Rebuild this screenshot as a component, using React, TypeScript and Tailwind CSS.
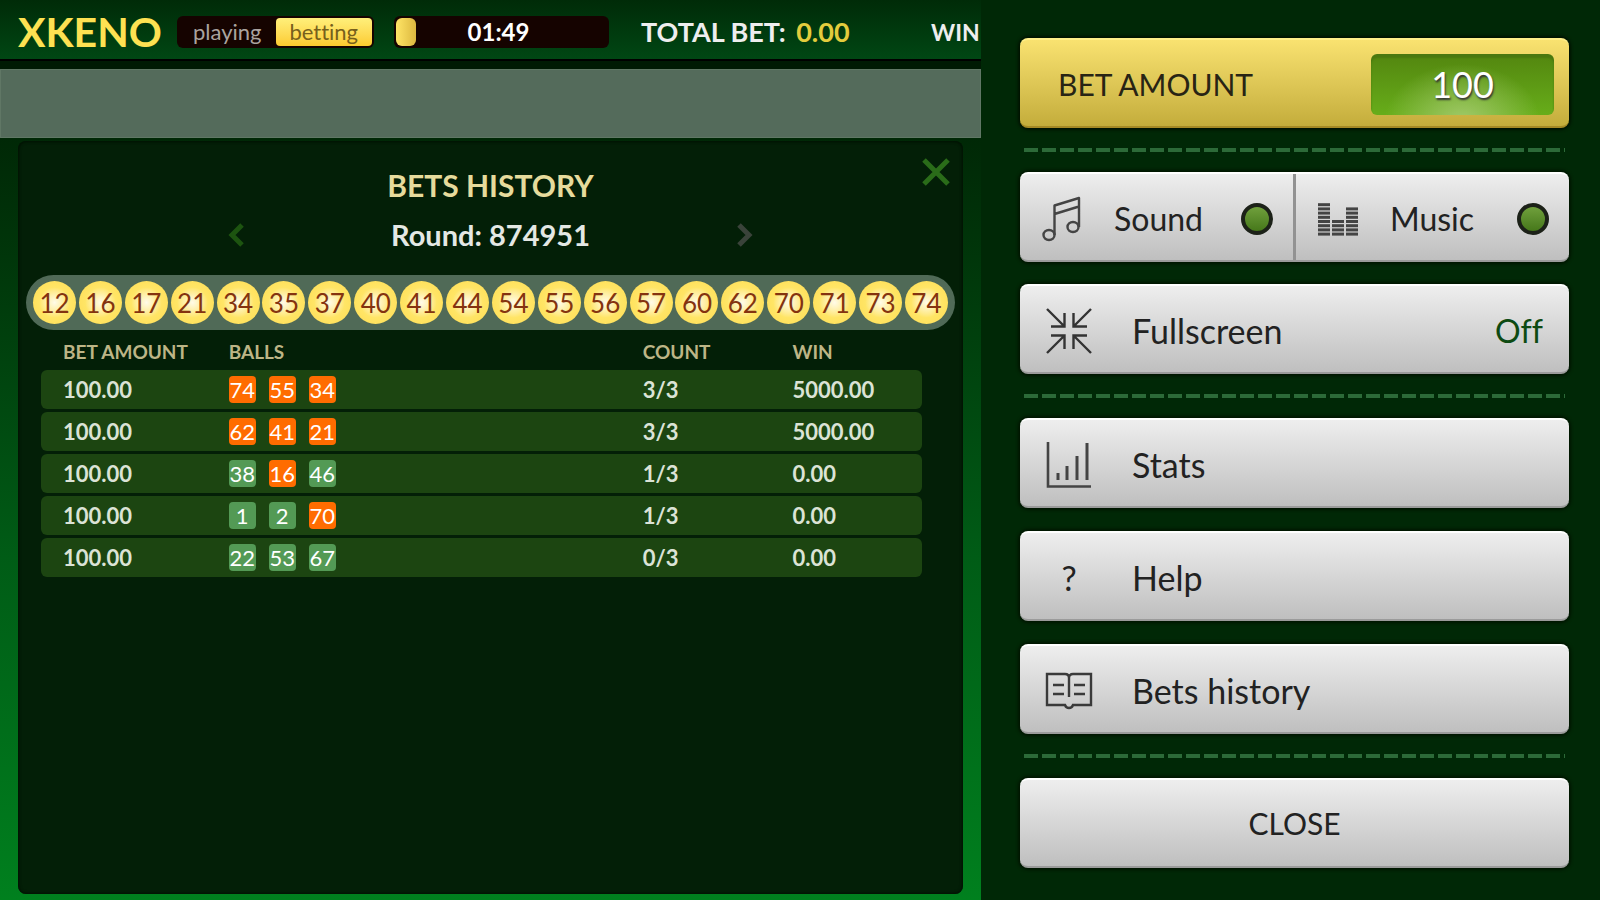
import type { ReactNode } from "react";

const drawn = [12, 16, 17, 21, 34, 35, 37, 40, 41, 44, 54, 55, 56, 57, 60, 62, 70, 71, 73, 74];

const bets = [
  { amount: "100.00", balls: [74, 55, 34], count: "3/3", win: "5000.00" },
  { amount: "100.00", balls: [62, 41, 21], count: "3/3", win: "5000.00" },
  { amount: "100.00", balls: [38, 16, 46], count: "1/3", win: "0.00" },
  { amount: "100.00", balls: [1, 2, 70], count: "1/3", win: "0.00" },
  { amount: "100.00", balls: [22, 53, 67], count: "0/3", win: "0.00" }
];

const silver =
  "h-[90px] w-full rounded-lg border-t-2 border-b-2 border-t-white border-b-[#9b9b9b] bg-linear-to-b from-[#eeeeee] to-[#bfbfbf] text-[#222] shadow-[0_0_3px_2px_#001500]";

function NoteIcon() {
  return (
    <svg viewBox="0 0 40 46" className="h-[46px] w-10 shrink-0" fill="none" stroke="#444" strokeWidth="2.4">
      <ellipse cx="7" cy="39" rx="5.5" ry="5" />
      <ellipse cx="31" cy="31" rx="5.5" ry="5" />
      <path d="M12.5 39V9.500L37 2V31M12.500 18L37 10.500" strokeLinejoin="round" />
    </svg>
  );
}

function EqualizerIcon() {
  const columns = [8, 4, 7];
  return (
    <svg viewBox="0 0 40 34" className="h-[34px] w-10 shrink-0" fill="#444">
      {columns.map((rows, c) =>
        Array.from({ length: rows }, (_, r) => (
          <rect key={`${c}-${r}`} x={c * 14} y={30.600 - r * 4.200} width="12" height="3" />
        ))
      )}
    </svg>
  );
}

function ShrinkIcon() {
  return (
    <svg viewBox="0 0 46 46" className="h-[46px] w-[46px]" fill="none" stroke="#333" strokeWidth="2.400">
      <path d="M1 1L18 18M18.500 5V18.500H5M45 1L28 18M27.500 5V18.500H41M1 45L18 28M18.500 41V27.500H5M45 45L28 28M27.500 41V27.500H41" />
    </svg>
  );
}

function StatsIcon() {
  return (
    <svg viewBox="0 0 46 46" className="h-[46px] w-[46px]" fill="none" stroke="#444" strokeWidth="2.600">
      <path d="M2 0V44.500H45" />
      <path d="M12 31V38M21 24V38M31 14V38M41 1V38" strokeWidth="3" />
    </svg>
  );
}

function BookIcon() {
  return (
    <svg viewBox="0 0 48 38" className="h-[38px] w-12" fill="none" stroke="#3a3a3a" strokeWidth="2.400">
      <path d="M2 2H20Q24 2 24 6Q24 2 28 2H46V33H28Q27 36 24 36Q21 36 20 33H2ZM24 6V25" />
      <path d="M8 13H19M8 22H19M29 13H40M29 22H40" />
    </svg>
  );
}

function Chevron({ right = false, color }: { right?: boolean; color: string }) {
  return (
    <svg viewBox="0 0 16 24" className="h-6 w-4" fill="none" stroke={color} strokeWidth="5">
      <path d={right ? "M2 2L12 12L2 22" : "M14 2L4 12L14 22"} />
    </svg>
  );
}

function MenuButton({ icon, label, value }: { icon: ReactNode; label: string; value?: string }) {
  return (
    <button className={`${silver} flex items-center pt-[3px] pr-[26px] pl-6`}>
      <span className="flex w-[50px] justify-center">{icon}</span>
      <span className="ml-[38px] text-[34px] leading-10">{label}</span>
      {value && <span className="ml-auto text-[32px] leading-10 text-[#0d4a12]">{value}</span>}
    </button>
  );
}

function Toggle({ id, label, icon }: { id: string; label: string; icon: ReactNode }) {
  return (
    <label htmlFor={id} className="flex h-full flex-1 cursor-pointer items-center pt-[3px] pr-5 pl-[22px]">
      {icon}
      <span className="ml-8 text-[32px] leading-10">{label}</span>
      <input
        id={id}
        type="checkbox"
        defaultChecked
        className="ml-auto h-8 w-8 appearance-none rounded-full border-4 border-[#1c2118] bg-[#444] checked:bg-linear-to-b checked:from-[#70a03c] checked:to-[#46781a]"
      />
    </label>
  );
}

function Dashes() {
  return (
    <hr className="mx-1 my-5 h-1 border-0 bg-[repeating-linear-gradient(90deg,#2c6a38_0_14px,transparent_14px_18px)]" />
  );
}

export default function App() {
  return (
    <main className="grid min-h-screen grid-cols-[981fr_619fr] bg-[#002806] font-['Lato','Trebuchet_MS',sans-serif] [font-variant-ligatures:none]">
      <div className="flex min-w-0 flex-col overflow-hidden">
        <header className="flex h-[69px] items-center border-b-8 border-[#001a03] bg-linear-to-b from-[#002b08] to-[#004814] pt-[2px] pl-[18px] whitespace-nowrap shadow-[inset_0_-2px_0_#000]">
          <h1 className="w-[159px] shrink-0 text-[41px] leading-10 font-bold text-[#fde152]">XKENO</h1>
          <div className="flex h-8 w-[197px] shrink-0 rounded-md bg-[#150300] p-[2px] text-[22px] leading-7">
            <button className="flex-1 text-[#aaa39f]">playing</button>
            <button className="flex-1 rounded-sm bg-linear-to-b from-[#fff07a] to-[#fccb2c] text-[#77601c]">betting</button>
          </div>
          <div className="ml-5 flex h-8 w-[215px] shrink-0 items-center rounded-md bg-[#150300] pl-[2px]">
            <span className="h-7 w-5 rounded-md bg-linear-to-r from-[#ffe566] to-[#dcb83f]" />
            <time className="flex-1 pr-7 text-center text-2xl font-bold text-white">01:49</time>
          </div>
          <p className="ml-8 w-[290px] shrink-0 text-[27px] leading-8 font-bold text-[#eeeeee]">
            TOTAL BET: <span className="ml-1 text-[#e3cc3d]">0.00</span>
          </p>
          <p className="text-[23px] leading-8 font-bold text-[#eeeeee]">WIN</p>
        </header>
        <div className="h-[69px] border border-[#607765] bg-[#546b5b]" />

        <div className="flex flex-1 flex-col bg-linear-to-b from-[#002806] via-[#005c16] via-55% to-[#00801e] px-[18px] pt-[3px] pb-[6px]">
          <section className="relative flex-1 rounded-lg bg-[#031f07] px-2 pt-6 shadow-[inset_0_0_3px_1px_#001002]">
            <button aria-label="Close history" className="absolute top-[17px] right-[13px]">
              <svg viewBox="0 0 28 28" className="h-7 w-7" stroke="#2a6c19" strokeWidth="5">
                <path d="M2 2L26 26M26 2L2 26" />
              </svg>
            </button>
            <h2 className="text-center text-[30px] leading-10 font-bold text-[#e6db9c]">BETS HISTORY</h2>
            <div className="mt-3 flex items-center justify-center gap-[147px]">
              <button aria-label="Previous round"><Chevron color="#1d5410" /></button>
              <p className="text-center text-[29px] leading-9 font-bold text-[#e4e8e4]">Round: 874951</p>
              <button aria-label="Next round"><Chevron right color="#3a433a" /></button>
            </div>

            <ol className="mt-[22px] flex h-[55px] items-center justify-between rounded-full bg-[#506a57] px-[7px]">
              {drawn.map((n) => (
                <li
                  key={n}
                  className="flex h-[43px] w-[43px] items-center justify-center rounded-full bg-radial from-[#fffbe8] via-[#ffe566] via-50% to-[#ffdc50] text-[26px] leading-8 text-[#84330f]"
                >
                  {n}
                </li>
              ))}
            </ol>

            <table className="mx-[15px] w-[calc(100%-48px)] table-fixed border-separate border-spacing-x-0 border-spacing-y-[3px] text-left text-[22px] leading-6 font-bold text-[#dbe3d6]">
              <thead>
                <tr className="h-[34px] text-[19px] text-[#bdb586]">
                  <th className="w-[21.300%] pt-1 pl-[22px]">BET AMOUNT</th>
                  <th className="w-[47%] pt-1">BALLS</th>
                  <th className="w-[17%] pt-1">COUNT</th>
                  <th className="pt-1">WIN</th>
                </tr>
              </thead>
              <tbody>
                {bets.map((bet) => (
                  <tr key={bet.balls.join("-")} className="h-[39px] bg-[#1c4511]">
                    <td className="rounded-l-md pl-[22px]">{bet.amount}</td>
                    <td>
                      <div className="flex gap-[13px]">
                        {bet.balls.map((ball) => (
                          <span
                            key={ball}
                            className={`flex h-[27px] w-[27px] items-center justify-center rounded-sm font-normal text-white ${
                              drawn.includes(ball) ? "bg-[#ff6c00]" : "bg-[#539a55]"
                            }`}
                          >
                            {ball}
                          </span>
                        ))}
                      </div>
                    </td>
                    <td>{bet.count}</td>
                    <td className="rounded-r-md">{bet.win}</td>
                  </tr>
                ))}
              </tbody>
            </table>
          </section>
        </div>
      </div>

      <aside className="pt-[38px] pr-[31px] pl-[39px]">
        <div className="flex h-[90px] items-center justify-between rounded-lg border-t-2 border-b-2 border-t-[#fff08a] border-b-[#a58a25] bg-linear-to-b from-[#f9e270] to-[#c4ad3b] pt-[2px] pr-[15px] pl-[38px] shadow-[0_0_3px_2px_#001200]">
          <label htmlFor="bet-amount" className="text-[30px] leading-10 text-[#282414]">BET AMOUNT</label>
          <input
            id="bet-amount"
            defaultValue="100"
            className="h-[61px] w-[183px] rounded-md bg-[radial-gradient(ellipse_at_50%_110%,#a2c96a_0%,transparent_60%),linear-gradient(#53860f,#67ad1a)] text-center text-4xl text-white shadow-[inset_0_4px_2px_#49780f] [text-shadow:1px_2px_2px_#333]"
          />
        </div>
        <Dashes />
        <div className="flex flex-col gap-[22px]">
          <div className={`${silver} flex items-center`}>
            <Toggle id="sound" label="Sound" icon={<NoteIcon />} />
            <span className="h-full w-[3px] bg-[#929292]" />
            <Toggle id="music" label="Music" icon={<EqualizerIcon />} />
          </div>
          <MenuButton icon={<ShrinkIcon />} label="Fullscreen" value="Off" />
        </div>
        <Dashes />
        <div className="flex flex-col gap-[23px]">
          <MenuButton icon={<StatsIcon />} label="Stats" />
          <MenuButton icon={<span className="text-[34px] leading-10">?</span>} label="Help" />
          <MenuButton icon={<BookIcon />} label="Bets history" />
        </div>
        <Dashes />
        <button className={`${silver} text-[30px] leading-10`}>CLOSE</button>
      </aside>
    </main>
  );
}
